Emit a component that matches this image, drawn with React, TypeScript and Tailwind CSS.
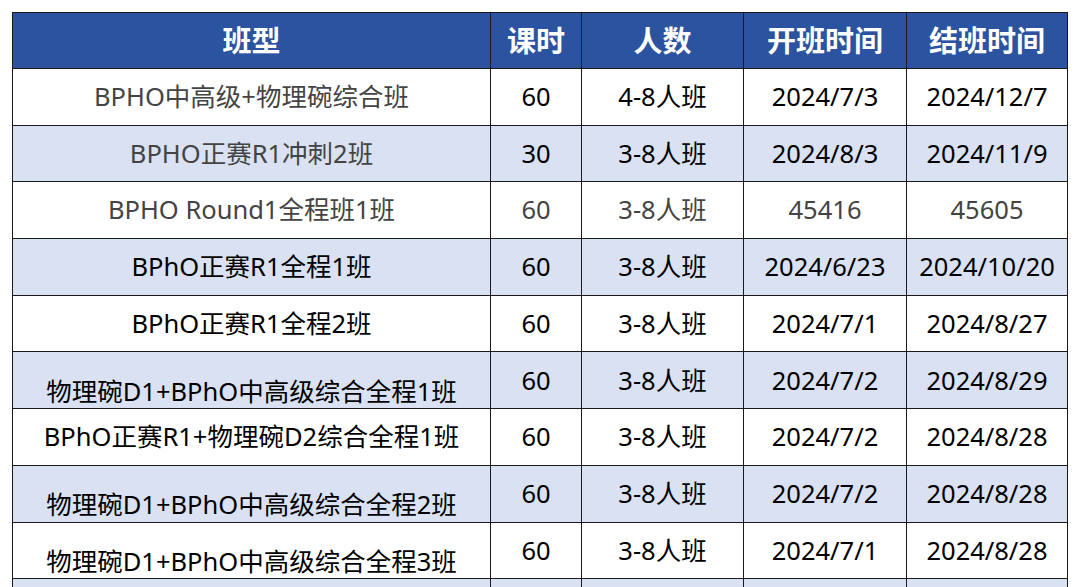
type Row = {
  name: string;
  hours: string;
  size: string;
  start: string;
  end: string;
  alt: boolean;
  greyName?: boolean;
  greyAll?: boolean;
  low?: boolean;
};

const rows: Row[] = [
  { name: "BPHO中高级+物理碗综合班", hours: "60", size: "4-8人班", start: "2024/7/3", end: "2024/12/7", alt: false, greyName: true },
  { name: "BPHO正赛R1冲刺2班", hours: "30", size: "3-8人班", start: "2024/8/3", end: "2024/11/9", alt: true, greyName: true },
  { name: "BPHO Round1全程班1班", hours: "60", size: "3-8人班", start: "45416", end: "45605", alt: false, greyAll: true },
  { name: "BPhO正赛R1全程1班", hours: "60", size: "3-8人班", start: "2024/6/23", end: "2024/10/20", alt: true },
  { name: "BPhO正赛R1全程2班", hours: "60", size: "3-8人班", start: "2024/7/1", end: "2024/8/27", alt: false },
  { name: "物理碗D1+BPhO中高级综合全程1班", hours: "60", size: "3-8人班", start: "2024/7/2", end: "2024/8/29", alt: true, low: true },
  { name: "BPhO正赛R1+物理碗D2综合全程1班", hours: "60", size: "3-8人班", start: "2024/7/2", end: "2024/8/28", alt: false },
  { name: "物理碗D1+BPhO中高级综合全程2班", hours: "60", size: "3-8人班", start: "2024/7/2", end: "2024/8/28", alt: true, low: true },
  { name: "物理碗D1+BPhO中高级综合全程3班", hours: "60", size: "3-8人班", start: "2024/7/1", end: "2024/8/28", alt: false, low: true },
  { name: "", hours: "", size: "", start: "", end: "", alt: true },
];

const cell = "border border-[#1a1a1a] text-center p-0";

export default function App() {
  return (
    <div
      className="w-[1080px] h-[587px] overflow-hidden bg-white pt-[12px] pl-[12px]"
      style={{ fontFamily: '"Noto Sans", "Noto Sans CJK SC", sans-serif' }}
    >
      <table className="border-collapse table-fixed w-[1055px] text-[25.5px] leading-none">
        <colgroup>
          <col className="w-[478px]" />
          <col className="w-[91px]" />
          <col className="w-[162px]" />
          <col className="w-[163px]" />
          <col className="w-[161px]" />
        </colgroup>
        <thead>
          <tr className="h-[56px] bg-[#2b539f] text-white text-[29px] font-bold">
            <th className={cell}>班型</th>
            <th className={cell}>课时</th>
            <th className={cell}>人数</th>
            <th className={cell}>开班时间</th>
            <th className={cell}>结班时间</th>
          </tr>
        </thead>
        <tbody>
          {rows.map((r, i) => {
            const base = r.greyAll ? "text-[#444]" : "text-black";
            return (
              <tr key={i} className={`h-[56.7px] ${r.alt ? "bg-[#d9e1f2]" : "bg-white"} ${base}`}>
                <td
                  className={`${cell} ${r.low ? "align-bottom pb-[4px]" : "align-middle"} ${
                    r.greyName || r.greyAll ? "text-[#444]" : ""
                  }`}
                >
                  {r.name}
                </td>
                <td className={cell}>{r.hours}</td>
                <td className={cell}>{r.size}</td>
                <td className={cell}>{r.start}</td>
                <td className={cell}>{r.end}</td>
              </tr>
            );
          })}
        </tbody>
      </table>
    </div>
  );
}
